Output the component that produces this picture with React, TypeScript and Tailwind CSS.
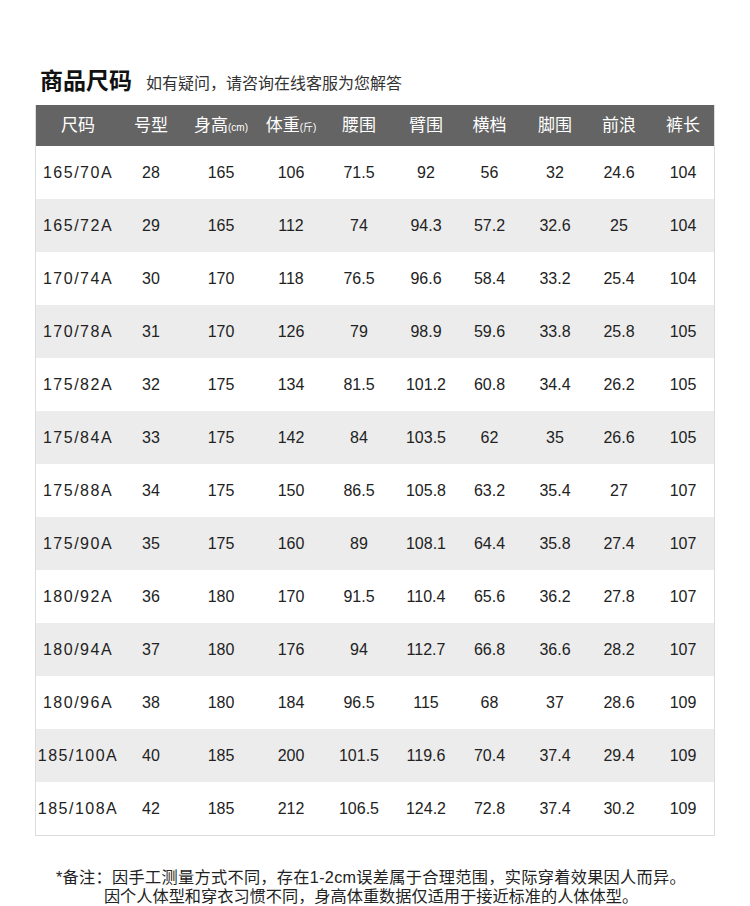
import React from 'react';

const headers: { label: string; unit?: string }[] = [
  { label: '尺码' },
  { label: '号型' },
  { label: '身高', unit: '(cm)' },
  { label: '体重', unit: '(斤)' },
  { label: '腰围' },
  { label: '臂围' },
  { label: '横档' },
  { label: '脚围' },
  { label: '前浪' },
  { label: '裤长' },
];

const rows: string[][] = [
  ['165/70A', '28', '165', '106', '71.5', '92', '56', '32', '24.6', '104'],
  ['165/72A', '29', '165', '112', '74', '94.3', '57.2', '32.6', '25', '104'],
  ['170/74A', '30', '170', '118', '76.5', '96.6', '58.4', '33.2', '25.4', '104'],
  ['170/78A', '31', '170', '126', '79', '98.9', '59.6', '33.8', '25.8', '105'],
  ['175/82A', '32', '175', '134', '81.5', '101.2', '60.8', '34.4', '26.2', '105'],
  ['175/84A', '33', '175', '142', '84', '103.5', '62', '35', '26.6', '105'],
  ['175/88A', '34', '175', '150', '86.5', '105.8', '63.2', '35.4', '27', '107'],
  ['175/90A', '35', '175', '160', '89', '108.1', '64.4', '35.8', '27.4', '107'],
  ['180/92A', '36', '180', '170', '91.5', '110.4', '65.6', '36.2', '27.8', '107'],
  ['180/94A', '37', '180', '176', '94', '112.7', '66.8', '36.6', '28.2', '107'],
  ['180/96A', '38', '180', '184', '96.5', '115', '68', '37', '28.6', '109'],
  ['185/100A', '40', '185', '200', '101.5', '119.6', '70.4', '37.4', '29.4', '109'],
  ['185/108A', '42', '185', '212', '106.5', '124.2', '72.8', '37.4', '30.2', '109'],
];

const cols = 'grid grid-cols-[84px_62px_78px_62px_74px_60px_67px_64px_64px_64px]';

export default function App() {
  return (
    <div
      className="w-[750px] bg-white text-[#222]"
      style={{ fontFamily: '"Liberation Sans", Arial, "Noto Sans CJK SC", sans-serif' }}
    >
      {/* Title */}
      <div className="flex items-end gap-[14px] pl-[40px] h-[105px] pb-[12px]">
        <span className="text-[23px] font-bold leading-none text-[#111]">商品尺码</span>
        <span className="text-[16px] leading-none text-[#333] pb-[1px]">如有疑问，请咨询在线客服为您解答</span>
      </div>

      {/* Table */}
      <div className="ml-[35px] w-[680px] border border-[#dcdcdc] border-t-0">
        <div className={`${cols} h-[41px] bg-[#646464] text-white text-[17px]`}>
          {headers.map((h) => (
            <div key={h.label} className="flex items-center justify-center">
              {h.label}
              {h.unit && <span className="text-[10px] mt-[3px]">{h.unit}</span>}
            </div>
          ))}
        </div>
        {rows.map((r, i) => (
          <div
            key={r[0]}
            className={`${cols} h-[53px] text-[16px] ${i % 2 === 1 ? 'bg-[#ececec]' : 'bg-white'}`}
          >
            {r.map((c, j) => (
              <div
                key={j}
                className={`flex items-center justify-center ${j === 0 ? 'tracking-[1.5px]' : ''}`}
              >
                {c}
              </div>
            ))}
          </div>
        ))}
      </div>

      {/* Notes */}
      <div className="mt-[32px] text-center text-[16.2px] leading-[19px] text-[#222] pr-[8px]">
        <p className="tracking-[0.3px]">*备注：因手工测量方式不同，存在1-2cm误差属于合理范围，实际穿着效果因人而异。</p>
        <p>因个人体型和穿衣习惯不同，身高体重数据仅适用于接近标准的人体体型。</p>
      </div>
    </div>
  );
}
